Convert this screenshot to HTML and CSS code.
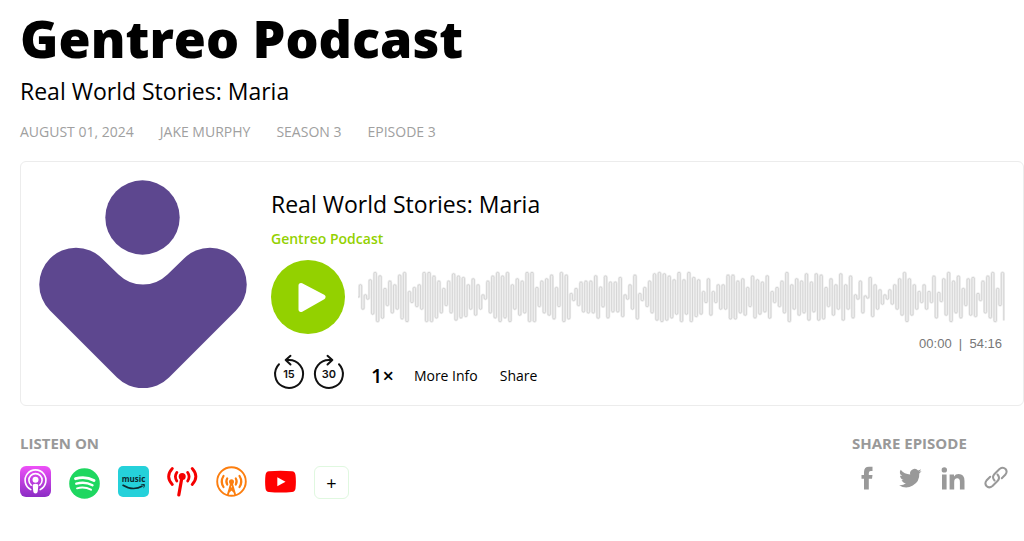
FILE: index.html
```
<!DOCTYPE html>
<html lang="en">
<head>
    <meta charset="UTF-8">
    <meta name="viewport" content="width=device-width, initial-scale=1.0">
    <title>Gentreo Podcast</title>
    <link rel="stylesheet" href="styles.css">
</head>
<body>
    <!-- Header -->
    <header>
        <h1>Gentreo Podcast</h1>
        <h2 class="episode-title">Real World Stories: Maria</h2>
        <ul class="episode-meta">
            <li>AUGUST 01, 2024</li>
            <li>JAKE MURPHY</li>
            <li>SEASON 3</li>
            <li>EPISODE 3</li>
        </ul>
    </header>

    <!-- Player -->
    <main class="player">
        <svg class="artwork" viewBox="0 0 208 208" role="img" aria-label="Gentreo">
            <circle cx="103.5" cy="37.5" r="37.2"/>
            <path d="M63 78.5L79.5 94.5A35 35 0 0 0 128.5 94.5L145 78.5A36 36 0 0 1 197 130.5L130 197.5A36.8 36.8 0 0 1 78 197.5L11 130.5A36 36 0 0 1 63 78.5Z"/>
        </svg>

        <div class="player-body">
            <h2 class="player-title">Real World Stories: Maria</h2>
            <a href="#" class="show-link">Gentreo Podcast</a>

            <div class="playback">
                <button type="button" class="play-button" aria-label="Play">
                    <svg viewBox="0 0 74 74"><path d="M30 25.500L52 37L30 49.500Z"/></svg>
                </button>
                <svg class="waveform" viewBox="0 0 1936 156" preserveAspectRatio="none" aria-hidden="true">
                    <path class="wave-fill"/>
                    <path class="wave-line"/>
                </svg>
            </div>

            <div class="time">00:00 &nbsp;|&nbsp; 54:16</div>

            <div class="controls">
                <button type="button" class="skip-button" aria-label="Back 15 seconds">
                    <svg viewBox="0 0 32 34">
                        <path d="M6 9.300A14 14 0 1 0 16 5H12.700M17.500 .800L12.700 5L17.500 9.500"/>
                        <text x="16" y="23">15</text>
                    </svg>
                </button>
                <button type="button" class="skip-button" aria-label="Forward 30 seconds">
                    <svg viewBox="0 0 32 34">
                        <path d="M26 9.300A14 14 0 1 1 16 5H19.300M14.500 .800L19.300 5L14.500 9.500"/>
                        <text x="16" y="23">30</text>
                    </svg>
                </button>
                <button type="button" class="speed-button">1×</button>
                <button type="button" class="text-button">More Info</button>
                <button type="button" class="text-button">Share</button>
            </div>
        </div>
    </main>

    <!-- Footer links -->
    <footer>
        <section>
            <h3>LISTEN ON</h3>
            <div class="listen-links">
                <a href="#" aria-label="Apple Podcasts">
                    <svg viewBox="0 0 31 31">
                        <defs>
                            <linearGradient id="apple" x1="0" y1="0" x2="0" y2="1">
                                <stop offset="0" stop-color="#ee50f8"/>
                                <stop offset="1" stop-color="#8b2cc4"/>
                            </linearGradient>
                        </defs>
                        <rect width="31" height="31" rx="6" fill="url(#apple)"/>
                        <g fill="none" stroke="#fff" stroke-width="1.600" stroke-linecap="round">
                            <path d="M10.800 23.600A10.400 10.400 0 1 1 20.200 23.600"/>
                            <path d="M11.200 19.200A6.600 6.600 0 1 1 19.800 19.200"/>
                        </g>
                        <circle cx="15.500" cy="13.800" r="3" fill="#fff"/>
                        <path d="M12.600 19.300Q12.600 17.800 15.500 17.800T18.400 19.300L17.700 25.500Q17.500 27.500 15.500 27.500T13.300 25.500Z" fill="#fff"/>
                    </svg>
                </a>
                <a href="#" class="spotify" aria-label="Spotify">
                    <svg viewBox="0 0 31 31">
                        <circle cx="15.500" cy="15.500" r="15.300" fill="#1ed760"/>
                        <g fill="none" stroke="#fff" stroke-linecap="round">
                            <path d="M6.500 10.700Q16.500 7.800 25 12.500" stroke-width="2.900"/>
                            <path d="M7.300 15.700Q16 13.200 23.500 17.200" stroke-width="2.400"/>
                            <path d="M8 20.300Q15.500 18.300 22 21.700" stroke-width="1.900"/>
                        </g>
                    </svg>
                </a>
                <a href="#" aria-label="Amazon Music">
                    <svg viewBox="0 0 31 31">
                        <rect width="31" height="31" rx="5" fill="#25d1da"/>
                        <text class="amazon-text" x="15.500" y="16">music</text>
                        <path d="M4.500 19Q15 25.500 24.500 20" fill="none" stroke="#0c2a30" stroke-width="1.500"/>
                        <path d="M22.300 18.700Q26 17.400 27 18.600Q27 21 25.300 22.600Q26 20.500 25.500 19.400Z" fill="#0c2a30"/>
                    </svg>
                </a>
                <a href="#" aria-label="Podcast radio">
                    <svg viewBox="0 0 31 31">
                        <g fill="none" stroke="#f50000" stroke-width="2.800" stroke-linecap="round">
                            <path d="M9.800 6.500Q7 10.500 9.800 15M5.300 2.500Q-2 10.500 5.300 18.500M20.700 6.500Q23.500 10.500 20.700 15M25.200 2.500Q32.500 10.500 25.200 18.500"/>
                            <path d="M15 11L11.800 29" stroke-width="3.200"/>
                        </g>
                        <circle cx="15.200" cy="10.500" r="3.500" fill="#f50000"/>
                    </svg>
                </a>
                <a href="#" aria-label="Overcast">
                    <svg viewBox="0 0 31 31">
                        <g fill="none" stroke="#fc7e0f">
                            <circle cx="15.500" cy="15.500" r="14.300" stroke-width="1.900"/>
                            <path d="M11.200 12.500Q9.500 15.500 11.200 18.500M7.500 10Q4 15.500 7.500 21M19.800 12.500Q21.500 15.500 19.800 18.500M23.500 10Q27 15.500 23.500 21" stroke-width="2.200" stroke-linecap="round"/>
                            <path d="M15.500 16L11.600 29.500M15.500 16L19.400 29.500M14 21.500L18.300 26M17 21.500L12.700 26" stroke-width="1.900"/>
                        </g>
                        <circle cx="15.500" cy="15.700" r="2.500" fill="#fc7e0f"/>
                    </svg>
                </a>
                <a href="#" aria-label="YouTube">
                    <svg viewBox="0 0 31 31">
                        <path d="M4 5.300Q15.500 4.200 27 5.300Q30 5.500 30.500 9Q31.300 15.500 30.500 22.500Q30 25.600 27 26Q15.500 27.200 4 26Q1 25.600 .500 22.500Q-.300 15.500 .500 9Q1 5.500 4 5.300Z" fill="#f00"/>
                        <path d="M12.300 11.300L20.500 15.700L12.300 20.300Z" fill="#fff"/>
                    </svg>
                </a>
                <button type="button" class="more-button" aria-label="More apps">+</button>
            </div>
        </section>

        <section class="share">
            <h3>SHARE EPISODE</h3>
            <div class="share-links">
                <a href="#" aria-label="Facebook">
                    <svg viewBox="0 0 24 24"><path d="M9 23.500V12.800H6.500V9H9V6Q9 .800 14 .800H17.500V5H15.800Q13.800 5 13.800 7V9H17.500L17 12.800H13.800V23.500Z"/></svg>
                </a>
                <a href="#" aria-label="Twitter">
                    <svg viewBox="0 0 24 24"><path d="M23.600 5.100c-.8.400-1.700.6-2.600.7.900-.6 1.700-1.500 2-2.500-.9.500-1.900.9-2.900 1.100a4.600 4.600 0 0 0-7.900 4.200C8.400 8.400 5 6.600 2.700 3.800a4.600 4.600 0 0 0 1.400 6.200c-.7 0-1.500-.2-2.100-.6v.1c0 2.200 1.600 4.100 3.700 4.500-.7.200-1.400.2-2.100.1.600 1.800 2.300 3.200 4.300 3.200A9.300 9.300 0 0 1 1.100 19.200a13.100 13.100 0 0 0 20.200-11.700c.9-.6 1.700-1.500 2.300-2.400Z"/></svg>
                </a>
                <a href="#" aria-label="LinkedIn">
                    <svg viewBox="0 0 24 24"><path d="M1 8.500H5.600V23.500H1ZM8.600 8.500H13V10.500Q14.500 8.100 17.600 8.100Q23.500 8.100 23.500 15V23.500H18.900V16Q18.900 12.300 16.200 12.300Q13.200 12.300 13.200 16V23.500H8.600Z"/><circle cx="3.300" cy="3.900" r="2.700"/></svg>
                </a>
                <a href="#" aria-label="Copy link">
                    <svg class="link-icon" viewBox="0 0 24 24"><path d="M10.500 14.500Q7.500 11 10.500 8L15.500 3Q19 .500 21.500 3Q23.700 5.500 21.500 8.500L17.800 12.200M13.500 8.500Q16.500 12 13.500 15L8.500 20Q5 22.700 2.500 20Q.300 17.500 2.500 14.500L6.200 10.800"/></svg>
                </a>
            </div>
        </section>
    </footer>

    <script src="script.js"></script>
</body>
</html>
```
FILE: styles.css
```
/* General Styles */
* {
    margin: 0;
    padding: 0;
    box-sizing: border-box;
}

body {
    padding: 6px 0 40px 20px;
    background: #fff;
    color: #000;
    font-family: "Open Sans", "Noto Sans", sans-serif;
    overflow-x: hidden;
}

a {
    color: inherit;
    text-decoration: none;
}

button {
    border: none;
    background: none;
    color: inherit;
    font-family: inherit;
    cursor: pointer;
}

svg {
    display: block;
}

/* Header */
h1 {
    font-size: 52px;
    line-height: 64px;
    font-weight: 800;
}

.episode-title,
.player-title {
    font-size: 23px;
    line-height: 36px;
    font-weight: 400;
}

.episode-title {
    margin-top: 3px;
}

.episode-meta {
    display: flex;
    flex-wrap: wrap;
    gap: 26px;
    margin: 12px 0 18px;
    list-style: none;
    color: #a0a0a0;
    font-size: 14px;
    line-height: 22px;
}

/* Player */
.player {
    display: flex;
    gap: 24px;
    padding: 18px 18px 16px;
    border: 1px solid #ececec;
    border-radius: 6px;
}

.artwork {
    flex: none;
    width: 208px;
    height: 208px;
    fill: #5d478f;
}

.player-body {
    flex: 1;
    min-width: 0;
    padding-top: 6px;
}

.show-link {
    display: block;
    margin-top: 7px;
    color: #93d100;
    font-size: 14px;
    line-height: 20px;
    font-weight: 600;
}

.playback {
    display: flex;
    align-items: center;
    gap: 13px;
    margin-top: 11px;
}

.play-button {
    flex: none;
    width: 74px;
    height: 74px;
    border-radius: 50%;
    background: #93d100;
}

.play-button path {
    fill: #fff;
    stroke: #fff;
    stroke-width: 5;
    stroke-linejoin: round;
}

.waveform {
    flex: 1;
    min-width: 0;
    height: 52px;
}

.waveform path {
    fill: none;
    stroke-linejoin: round;
}

.wave-fill {
    stroke: #eee;
    stroke-width: 7;
}

.wave-line {
    stroke: #c8c8c8;
    stroke-width: 2;
}

.time {
    padding-right: 3px;
    color: #777;
    font-family: "Liberation Sans", Arial, sans-serif;
    font-size: 13px;
    line-height: 20px;
    text-align: right;
}

.controls {
    display: flex;
    align-items: flex-end;
    margin-top: 1px;
}

.skip-button {
    width: 32px;
    height: 34px;
    margin: 0 6px 0 2px;
}

.skip-button svg {
    overflow: visible;
}

.skip-button path {
    fill: none;
    stroke: #111;
    stroke-width: 2;
    stroke-linecap: round;
    stroke-linejoin: round;
}

.skip-button text {
    fill: #111;
    font-family: Inter, sans-serif;
    font-size: 11px;
    font-weight: 600;
    text-anchor: middle;
}

.speed-button {
    margin: 0 20px;
    font-size: 20px;
    line-height: 26px;
    font-weight: 600;
}

.text-button {
    margin-right: 22px;
    font-size: 14px;
    line-height: 26px;
}

/* Footer */
footer {
    display: flex;
    justify-content: space-between;
    padding: 26px 16px 0 0;
}

h3 {
    color: #999;
    font-size: 15px;
    line-height: 22px;
    font-weight: 700;
}

.listen-links {
    display: flex;
    gap: 18px;
    margin-top: 12px;
}

.listen-links svg {
    width: 31px;
    height: 31px;
}

.spotify {
    padding-top: 2px;
}

.amazon-text {
    fill: #0c2a30;
    font-size: 8px;
    font-weight: 700;
    text-anchor: middle;
}

.more-button {
    width: 35px;
    height: 33px;
    border: 1px solid #e0f8e0;
    border-radius: 6px;
    font-size: 18px;
    line-height: 30px;
}

.share-links {
    display: flex;
    gap: 19px;
    margin-top: 12px;
    padding-left: 3px;
}

.share-links svg {
    width: 24px;
    height: 24px;
    fill: #999;
}

.share-links .link-icon {
    fill: none;
    stroke: #999;
    stroke-width: 2;
    stroke-linecap: round;
}
```
FILE: script.js
```
// Height of each peak above the middle line
const peaks = [
    37, 7, 52, 74, 64, 26, 48, 37, 66, 74, 17, 29, 37, 74, 74, 63, 48, 26, 48, 70, 63, 59,
    37, 55, 37, 7, 48, 63, 74, 63, 74, 37, 55, 48, 74, 74, 29, 48, 55, 66, 29, 74, 66,
    11, 26, 45, 48, 48, 64, 30, 63, 45, 45, 59, 7, 37, 66, 11, 29, 48, 70, 74, 70, 63, 52,
    74, 52, 74, 59, 52, 17, 55, 17, 37, 37, 66, 66, 48, 55, 29, 63, 52, 45, 64, 17, 29,
    48, 74, 37, 55, 48, 70, 45, 70, 66, 29, 55, 37, 70, 37, 63, 7, 48, 3, 59, 37, 22, 7,
    22, 37, 55, 74, 55, 37, 17, 37, 17, 63, 14, 55, 74, 48, 63, 26, 55, 59, 11, 48, 63, 74, 26, 74
];

// One continuous line that goes up and down for every peak
const step = 1936 / peaks.length;
const middle = 78;
const radius = step / 4;
let d = `M0 ${middle}H${radius}`;

peaks.forEach((peak, i) => {
    const left = i * step + radius;
    const right = left + 2 * radius;
    const bend = Math.max(peak - radius, 0);
    d += `V${middle - bend}A${radius} ${radius} 0 0 1 ${right} ${middle - bend}`;
    d += `V${middle + bend}`;
    if (i < peaks.length - 1) {
        d += `A${radius} ${radius} 0 0 0 ${right + 2 * radius} ${middle + bend}`;
    }
});

document.querySelectorAll(".waveform path").forEach((path) => {
    path.setAttribute("d", d);
});
```
